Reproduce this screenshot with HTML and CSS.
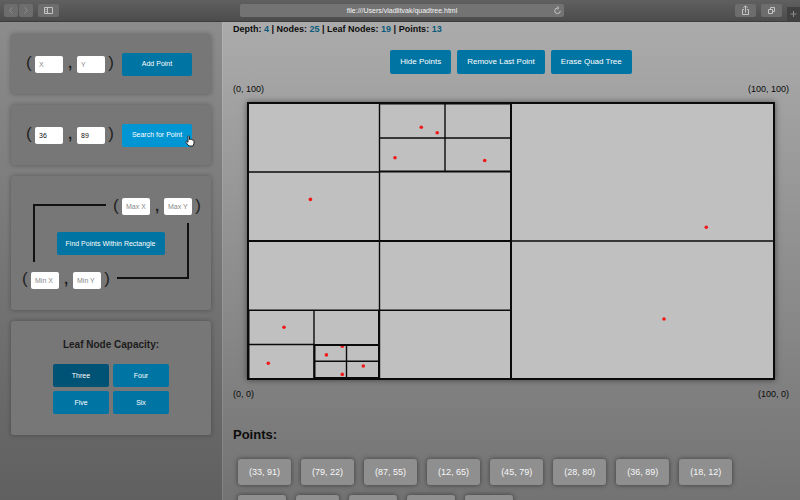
FILE: index.html
```html
<!DOCTYPE html>
<html lang="en">
<head>
<meta charset="utf-8">
<title>Quad Tree</title>
<link rel="stylesheet" href="styles.css">
</head>
<body>
<header class="browser">
  <nav class="browser-side">
    <span class="nav-pair">
      <button class="tool nav" aria-label="Back"><svg width="14" height="13" viewBox="0 0 14 13"><path d="M8.5 3.5 5.5 6.5l3 3" class="dim"/></svg></button>
      <button class="tool nav" aria-label="Forward"><svg width="14" height="13" viewBox="0 0 14 13"><path d="m5.5 3.5 3 3-3 3" class="dim"/></svg></button>
    </span>
    <button class="tool" aria-label="Sidebar"><svg width="21" height="13" viewBox="0 0 21 13"><path d="M6.500 3.500h8v6h-8zM9.500 3.500v6M7.500 5.500h1M7.500 7.500h1"/></svg></button>
  </nav>
  <div class="address">
    <span class="url">file:///Users/vladlitvak/quadtree.html</span>
    <button class="reload" aria-label="Reload"><svg width="9" height="9" viewBox="0 0 9 9"><path d="M7.3 4.8A2.8 2.8 0 1 1 4.5 2h1M4.2.5 5.8 2 4.2 3.5"/></svg></button>
  </div>
  <div class="browser-side browser-end">
    <button class="tool" aria-label="Share"><svg width="21" height="13" viewBox="0 0 21 13"><path d="M9 5.500H7.500v5h6v-5H12M10.500 8.500V2M8.500 3.800l2-2 2 2"/></svg></button>
    <button class="tool" aria-label="Tabs"><svg width="21" height="13" viewBox="0 0 21 13"><path d="M7.500 5.500h4v4h-4zM9.500 5.500v-2h4v4h-2"/></svg></button>
    <button class="new-tab" aria-label="New tab"><svg width="13" height="14" viewBox="0 0 13 14"><path d="M6.500 4v6M3.500 7h6" class="dim"/></svg></button>
  </div>
</header>
<div class="app">
  <aside class="sidebar">
    <form class="card entry">
      <span class="tuple"><span class="paren">(</span><input type="text" placeholder="X" aria-label="X"><span class="comma">,</span><input type="text" placeholder="Y" aria-label="Y"><span class="paren">)</span></span>
      <button type="button" class="btn">Add Point</button>
    </form>
    <form class="card entry">
      <span class="tuple"><span class="paren">(</span><input type="text" value="36" aria-label="Search X"><span class="comma">,</span><input type="text" value="89" aria-label="Search Y"><span class="paren">)</span></span>
      <button type="button" class="btn hovered">Search for Point
        <svg class="pointer" width="10" height="12" viewBox="0 0 10 12"><path d="M3 7.300V1.600c0-1 1.500-1 1.500 0v3c.3-.5 1.300-.4 1.500.2.400-.5 1.300-.3 1.500.4.500-.4 1.500-.1 1.500.7v2.400L8 11H4L1 7.600c-.6-.9.400-1.700 1.100-1z"/></svg>
      </button>
    </form>
    <form class="card range">
      <span class="corner corner-top"></span>
      <span class="tuple range-max"><span class="paren">(</span><input type="text" placeholder="Max X" aria-label="Max X"><span class="comma">,</span><input type="text" placeholder="Max Y" aria-label="Max Y"><span class="paren">)</span></span>
      <button type="button" class="btn range-find">Find Points Within Rectangle</button>
      <span class="tuple range-min"><span class="paren">(</span><input type="text" placeholder="Min X" aria-label="Min X"><span class="comma">,</span><input type="text" placeholder="Min Y" aria-label="Min Y"><span class="paren">)</span></span>
      <span class="corner corner-bottom"></span>
    </form>
    <section class="card capacity">
      <h2>Leaf Node Capacity:</h2>
      <div class="choices">
        <button class="btn chosen">Three</button>
        <button class="btn">Four</button>
        <button class="btn">Five</button>
        <button class="btn">Six</button>
      </div>
    </section>
  </aside>
  <main class="main">
    <p class="stats">Depth: <b>4</b> | Nodes: <b>25</b> | Leaf Nodes: <b>19</b> | Points: <b>13</b></p>
    <div class="actions">
      <button class="btn">Hide Points</button>
      <button class="btn">Remove Last Point</button>
      <button class="btn">Erase Quad Tree</button>
    </div>
    <div class="bounds"><span>(0, 100)</span><span>(100, 100)</span></div>
    <svg class="tree" viewBox="247 102 528 278" role="img" aria-label="Quad tree">
      <rect x="247" y="102" width="528" height="278" fill="#c0c0c0"/>
      <g class="thin">
        <path d="M248 172H380M445 104V172M380 138H511M379.5 103V379M511 241H774M248 310.3H511M314 310V379M248 344.5H314M346.5 345V379M314 361.3H379"/>
      </g>
      <g class="thick">
        <path d="M511 103V379M248 241H511M314 345H379M379 310V379M314.5 345V379M314 378H379M380 171.5H511M380 103.5H511M248.500 310V379"/>
      </g>
      <path class="frame" d="M248 103H774V379H248z"/>
      <g fill="#f01818">
        <circle cx="421.300" cy="127.300" r="1.800"/><circle cx="437.200" cy="132.800" r="1.800"/>
        <circle cx="395" cy="157.700" r="1.800"/><circle cx="484.700" cy="160.500" r="1.800"/>
        <circle cx="310.400" cy="199.400" r="1.800"/><circle cx="706.300" cy="227.200" r="1.800"/>
        <circle cx="664" cy="319" r="1.800"/><circle cx="284" cy="327.200" r="1.800"/>
        <circle cx="268.300" cy="363.200" r="1.800"/><circle cx="326.400" cy="354.900" r="1.800"/>
        <path d="M340.300 346h4c0 2.500-4 2.500-4 0z"/><circle cx="342.300" cy="374.400" r="1.800"/>
        <circle cx="363.300" cy="366" r="1.800"/>
      </g>
    </svg>
    <div class="bounds"><span>(0, 0)</span><span>(100, 0)</span></div>
    <h1>Points:</h1>
    <ul class="points">
      <li>(33, 91)</li><li>(79, 22)</li><li>(87, 55)</li><li>(12, 65)</li><li>(45, 79)</li><li>(28, 80)</li><li>(36, 89)</li><li>(18, 12)</li>
      <li>(7, 19)</li><li>(4, 6)</li><li>(15, 9)</li><li>(18, 2)</li><li>(22, 5)</li>
    </ul>
  </main>
</div>
</body>
</html>
```
FILE: styles.css
```css
* { box-sizing: border-box; }
body {
  margin: 0;
  height: 100vh;
  display: flex;
  flex-direction: column;
  overflow: hidden;
  font: 9px/12px "Liberation Sans", Arial, sans-serif;
  color: #0c0c0c;
}
button, input { font: inherit; border: 0; margin: 0; padding: 0; }
svg { display: block; }

.browser {
  flex: none;
  height: 22px;
  display: flex;
  align-items: center;
  background: linear-gradient(#606060, #4c4c4c);
  border-bottom: 1px solid #3c3c3c;
}
.browser svg { fill: none; stroke: #c4c4c4; stroke-width: 1; }
.browser .dim { stroke: #8c8c8c; }
.browser-side { flex: 1; display: flex; align-items: center; gap: 5px; padding-left: 4px; }
.browser-end { align-self: stretch; justify-content: flex-end; padding-left: 0; }
.nav-pair { display: flex; gap: 1px; }
.tool { background: #6d6d6d; border-radius: 2px; }
.address {
  width: 324px;
  height: 13px;
  display: flex;
  align-items: center;
  background: #737373;
  border-radius: 2px;
  font-size: 7px;
  color: #f6f6f6;
}
.url { flex: 1; text-align: center; padding-left: 11px; }
.reload { background: none; margin-right: 2px; }
.new-tab { align-self: flex-end; width: 13px; height: 14px; background: #414141; }

.app {
  flex: 1;
  min-height: 0;
  display: flex;
  background: linear-gradient(#ababab, #737373);
}
.sidebar {
  flex: none;
  width: 222px;
  padding: 12px 11px;
  display: flex;
  flex-direction: column;
  gap: 11px;
  background: linear-gradient(#8c8c8c, #606060);
}
.card {
  margin: 0;
  background: #777;
  border-radius: 3px;
  box-shadow: 0 0 5px rgba(0, 0, 0, 0.3);
}
.btn {
  height: 23px;
  background: #0074a2;
  color: #fff;
  border-radius: 2px;
  font-size: 7px;
  text-align: center;
}
.entry { height: 60px; display: flex; align-items: center; gap: 8px; padding-left: 15px; }
.entry .btn { width: 70px; }
.hovered { position: relative; background: #0095d3; }
.pointer {
  position: absolute;
  right: -3px;
  bottom: 0;
  fill: #fff;
  stroke: #222;
  stroke-width: 1;
}
.tuple { display: flex; align-items: center; color: #222; }
.tuple input {
  width: 28px;
  height: 17px;
  padding: 0 4px;
  background: #fff;
  border-radius: 2px;
  font-size: 7px;
  color: #111;
}
.tuple input::placeholder { color: #888; }
.paren { width: 9px; font-size: 17px; line-height: 17px; padding-bottom: 3px; }
.paren:last-child { text-align: right; }
.comma {
  width: 14px;
  padding-bottom: 3px;
  text-align: center;
  font-size: 15px;
  line-height: 17px;
  font-weight: bold;
}

.range {
  height: 134px;
  padding: 20px 11px;
  display: grid;
  grid-template-columns: 91px 88px;
  grid-template-rows: 21px 53px 20px;
  align-items: center;
}
.range-max { grid-area: 1 / 2; }
.range-find { grid-area: 2 / 1 / 3 / 3; width: 108px; justify-self: center; margin-right: 2px; }
.range-min { grid-area: 3 / 1; }
.corner { align-self: stretch; border: 0 solid #111; }
.corner-top { grid-area: 1 / 1 / 3 / 2; margin: 8px 7px 8px 11px; border-width: 2px 0 0 2px; }
.corner-bottom { grid-area: 2 / 2 / 4 / 3; margin: 6px 12px 11px 4px; border-width: 0 2px 2px 0; }

.capacity { height: 114px; padding-top: 17px; }
.capacity h2 { margin: 0; font-size: 10px; line-height: 13px; text-align: center; color: #1c1c1c; }
.choices {
  display: grid;
  grid-template-columns: 56px 56px;
  gap: 4px;
  justify-content: center;
  margin-top: 13px;
}
.chosen { background: #005374; }

.main {
  flex: 1;
  min-width: 0;
  padding: 1px 11px 0;
  overflow: hidden;
  box-shadow: inset 1px 0 rgba(255, 255, 255, 0.1);
}
.stats { margin: 0; font-weight: bold; }
.stats b { color: #0c5a7c; }
.actions { display: flex; justify-content: center; gap: 6px; margin: 15px 0 9px; }
.actions .btn { height: 24px; padding: 0 10px; font-size: 8px; }
.bounds { display: flex; justify-content: space-between; }
.tree {
  width: calc(100% - 28px);
  margin: 7px 14px 8px;
  box-shadow: 0 0 6px rgba(0, 0, 0, 0.5);
}
.tree path { stroke: #0a0a0a; fill: none; }
.thin path { stroke-width: 1.4; }
.thick path, .tree .frame { stroke-width: 2; }
.tree g[fill] path { fill: #f01818; stroke: none; }
.main h1 { margin: 27px 0 16px; font-size: 13px; line-height: 16px; }
.points { list-style: none; display: flex; flex-wrap: wrap; gap: 10px; margin: 0; padding: 0 5px; }
.points li {
  padding: 7px 11px;
  background: #8f8f8f;
  color: #f7f7f7;
  border-radius: 3px;
  box-shadow: 0 0 5px rgba(0, 0, 0, 0.5);
}
```
